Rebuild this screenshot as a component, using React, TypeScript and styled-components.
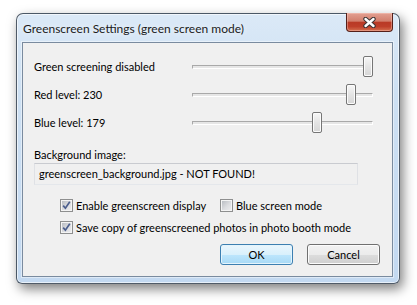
import React from "react";
import styled, { createGlobalStyle } from "styled-components";

const GlobalStyle = createGlobalStyle`
  html, body {
    margin: 0;
    padding: 0;
    background: #fff;
  }
  body {
    font-family: Lato, "Liberation Sans", sans-serif;
    font-size: 11px;
    color: #000;
  }
`;

const sliders = [
  { label: "Green screening disabled", value: 255 },
  { label: "Red level: 230", value: 230 },
  { label: "Blue level: 179", value: 179 },
];

const App = () => {
  return (
    <Page>
      <GlobalStyle />
      <Window>
        <TitleBar>
          <Title>Greenscreen Settings (green screen mode)</Title>
          <CloseButton>
            <svg width="13" height="11" viewBox="0 0 13 11">
              <path
                d="M2.5 2 L10.5 9 M10.5 2 L2.5 9"
                stroke="#3a3434"
                strokeWidth="4.4"
                strokeLinecap="round"
              />
              <path
                d="M2.5 2 L10.5 9 M10.5 2 L2.5 9"
                stroke="#fff"
                strokeWidth="2.4"
                strokeLinecap="round"
              />
            </svg>
          </CloseButton>
        </TitleBar>
        <Client>
          <SliderGroup>
            {sliders.map((s) => (
              <SliderRow key={s.label}>
                <Label>{s.label}</Label>
                <Slider>
                  <Track />
                  <Thumb style={{ left: 1 + (s.value * 170) / 255 }} />
                </Slider>
              </SliderRow>
            ))}
          </SliderGroup>
          <FieldLabel>Background image:</FieldLabel>
          <TextField>greenscreen_background.jpg - NOT FOUND!</TextField>
          <CheckRow $top={12}>
            <CheckItem $width={160}>
              <CheckBox checked />
              <span>Enable greenscreen display</span>
            </CheckItem>
            <CheckItem>
              <CheckBox />
              <span>Blue screen mode</span>
            </CheckItem>
          </CheckRow>
          <CheckRow $top={6}>
            <CheckItem>
              <CheckBox checked />
              <span>Save copy of greenscreened photos in photo booth mode</span>
            </CheckItem>
          </CheckRow>
          <ButtonRow>
            <Button $primary>OK</Button>
            <Button>Cancel</Button>
          </ButtonRow>
        </Client>
      </Window>
    </Page>
  );
};

const CheckBox = ({ checked }: { checked?: boolean }) => (
  <Box>
    {checked && (
      <svg width="11" height="11" viewBox="0 0 11 11">
        <path
          d="M2.2 5.6 L4.4 8.2 L8.8 1.8"
          fill="none"
          stroke="#4b5e8d"
          strokeWidth="1.7"
        />
      </svg>
    )}
  </Box>
);

const Page = styled.div`
  width: 417px;
  height: 305px;
  box-sizing: border-box;
  padding: 13px 0 0 16px;
  overflow: hidden;
`;

const Window = styled.div`
  width: 384px;
  box-sizing: border-box;
  border: 1px solid rgba(45, 55, 68, 0.8);
  border-radius: 7px 7px 6px 6px;
  padding: 0 6px 6px 5px;
  display: flex;
  flex-direction: column;
  background: linear-gradient(180deg, #dbe9f7 0%, #cde0f3 30%, #c3d9f1 100%);
  box-shadow: 3px 5px 12px rgba(0, 0, 0, 0.5),
    inset 0 0 0 1px rgba(255, 255, 255, 0.6);
`;

const TitleBar = styled.div`
  height: 28px;
  display: flex;
  justify-content: space-between;
  align-items: flex-start;
`;

const Title = styled.div`
  padding-left: 1px;
  font-size: 12px;
  line-height: 29px;
  color: #1b1b1b;
  text-shadow: 0 0 6px rgba(255, 255, 255, 0.95);
`;

const CloseButton = styled.div`
  width: 47px;
  height: 19px;
  margin-top: -1px;
  box-sizing: border-box;
  border: 1px solid #55201a;
  border-top: none;
  border-radius: 0 0 4px 4px;
  display: flex;
  align-items: center;
  justify-content: center;
  background: linear-gradient(
    180deg,
    #e3a091 0%,
    #d27f6d 45%,
    #b93a26 52%,
    #be3f2a 75%,
    #d4704f 100%
  );
  box-shadow: inset 0 0 0 1px rgba(255, 210, 200, 0.4);
`;

const Client = styled.div`
  height: 235px;
  box-sizing: border-box;
  border: 1px solid #7a8b9f;
  background: #f0f0f0;
  padding: 13px 12px 0 11px;
  display: flex;
  flex-direction: column;
  box-shadow: 0 0 0 1px rgba(255, 255, 255, 0.45);
`;

const SliderGroup = styled.div`
  display: flex;
  flex-direction: column;
  gap: 7px;
`;

const SliderRow = styled.div`
  display: grid;
  grid-template-columns: 158px 181px;
  align-items: center;
  height: 21px;
`;

const Label = styled.span`
  line-height: 16px;
`;

const Slider = styled.div`
  position: relative;
  height: 21px;
`;

const Track = styled.div`
  position: absolute;
  left: 0;
  right: 0;
  top: 9px;
  height: 4px;
  box-sizing: border-box;
  border: 1px solid;
  border-color: #a9a9a9 #fff #fff #a9a9a9;
  background: #e6e6e6;
`;

const Thumb = styled.div`
  position: absolute;
  top: 0;
  width: 10px;
  height: 21px;
  box-sizing: border-box;
  border: 1px solid #767676;
  border-radius: 2px;
  background: linear-gradient(180deg, #f7f7f7 0%, #e4e4e4 50%, #d6d6d6 100%);
  box-shadow: inset 0 0 0 1px #fbfbfb;
`;

const FieldLabel = styled.div`
  margin-top: 14px;
  line-height: 16px;
`;

const TextField = styled.div`
  width: 324px;
  height: 22px;
  box-sizing: border-box;
  border: 1px solid;
  border-color: #c9cbd0 #dfe1e5 #e4e7eb #dfe1e5;
  padding-left: 4px;
  line-height: 20px;
  background: #f0f0f0;
`;

const CheckRow = styled.div<{ $top: number }>`
  display: flex;
  align-items: center;
  height: 16px;
  margin-top: ${(p) => p.$top}px;
  margin-left: 26px;
`;

const CheckItem = styled.label<{ $width?: number }>`
  display: flex;
  align-items: center;
  gap: 3px;
  width: ${(p) => (p.$width ? `${p.$width}px` : "auto")};
`;

const Box = styled.span`
  width: 13px;
  height: 13px;
  box-sizing: border-box;
  border: 1px solid #8e8f8f;
  display: flex;
  align-items: center;
  justify-content: center;
  background: linear-gradient(135deg, #b3b7bd 0%, #dcdde0 55%, #eeeef0 100%);
  box-shadow: inset 0 0 0 1px #f4f4f4;
`;

const ButtonRow = styled.div`
  margin-top: 9px;
  display: flex;
  justify-content: flex-end;
  gap: 14px;
`;

const Button = styled.div<{ $primary?: boolean }>`
  width: 73px;
  height: 21px;
  box-sizing: border-box;
  border: 1px solid ${(p) => (p.$primary ? "#3c7fb1" : "#707070")};
  border-radius: 3px;
  display: flex;
  align-items: center;
  justify-content: center;
  background: ${(p) =>
    p.$primary
      ? "linear-gradient(180deg, #eaf6fd 0%, #d9f0fc 50%, #bee6fd 50%, #a7d9f5 100%)"
      : "linear-gradient(180deg, #f2f2f2 0%, #ebebeb 50%, #dddddd 50%, #cfcfcf 100%)"};
  box-shadow: inset 0 0 0 1px ${(p) => (p.$primary ? "#e4f4fc" : "#fcfcfc")};
`;

export default App;
